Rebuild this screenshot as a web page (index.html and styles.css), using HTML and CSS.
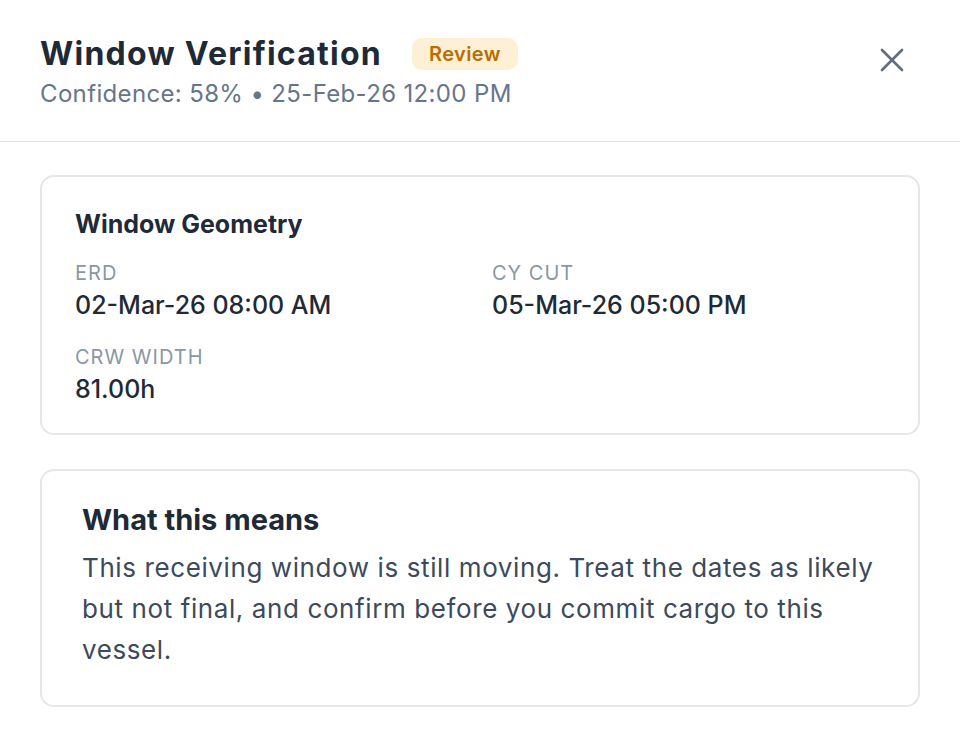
FILE: index.html
```html
<!DOCTYPE html>
<html lang="en">

<head>
    <meta charset="UTF-8">
    <meta name="viewport" content="width=device-width, initial-scale=1.0">
    <title>Window Verification</title>
    <link rel="stylesheet" href="styles.css">
</head>

<body>
    <div class="panel">
        <div class="panel__header">
            <div class="panel__heading">
                <div class="title__row">
                    <h1 class="title">Window Verification</h1>
                    <span class="badge">Review</span>
                </div>
                <p class="subtitle">Confidence: 58% &bull; 25-Feb-26 12:00 PM</p>
            </div>
            <button class="close" aria-label="Close">
                <svg width="24" height="24" viewBox="0 0 24 24" fill="none" stroke="currentColor" stroke-width="2.6" stroke-linecap="round">
                    <path d="M2 2L22 22M22 2L2 22" />
                </svg>
            </button>
        </div>

        <div class="panel__body">
            <div class="card">
                <h2 class="card__title">Window Geometry</h2>
                <div class="fields">
                    <div class="field">
                        <span class="field__label">ERD</span>
                        <span class="field__value">02-Mar-26 08:00 AM</span>
                    </div>
                    <div class="field">
                        <span class="field__label">CY CUT</span>
                        <span class="field__value">05-Mar-26 05:00 PM</span>
                    </div>
                    <div class="field">
                        <span class="field__label">CRW WIDTH</span>
                        <span class="field__value">81.00h</span>
                    </div>
                </div>
            </div>

            <div class="card card--note">
                <h2 class="note__title">What this means</h2>
                <p class="note__text">This receiving window is still moving. Treat the dates as likely but not final, and confirm before you commit cargo to this vessel.</p>
            </div>
        </div>
    </div>
</body>

</html>
```

FILE: styles.css
```css
* {
    box-sizing: border-box;
}

body {
    margin: 0;
    background: #fff;
    font-family: Inter, "Noto Sans", sans-serif;
    color: #1f2a37;
}

.panel__header {
    display: flex;
    justify-content: space-between;
    align-items: flex-start;
    padding: 34px 40px 0 40px;
    height: 142px;
    border-bottom: 1px solid #dde1e6;
}

.title__row {
    display: flex;
    align-items: center;
    gap: 30px;
}

.title {
    margin: 0;
    font-size: 32px;
    font-weight: 700;
    letter-spacing: 1.25px;
    line-height: 40px;
    color: #1f2a37;
}

.badge {
    background: #fdf0d4;
    color: #b86e00;
    font-size: 20px;
    font-weight: 600;
    letter-spacing: 0.4px;
    padding: 4px 17px;
    border-radius: 10px;
    line-height: 24px;
}

.subtitle {
    margin: 5px 0 0;
    font-size: 24px;
    letter-spacing: 0.35px;
    color: #66768a;
    line-height: 30px;
}

.close {
    border: none;
    background: none;
    padding: 0;
    margin: 14px 16px 0 0;
    color: #5f6f80;
    cursor: pointer;
}

.panel__body {
    display: flex;
    flex-direction: column;
    gap: 34px;
    padding: 33px 40px;
}

.card {
    border: 2px solid #e5e7eb;
    border-radius: 14px;
    padding: 32px 33px 29px;
}

.card__title {
    margin: 0 0 22px;
    font-size: 25px;
    font-weight: 700;
    line-height: 30px;
}

.fields {
    display: grid;
    grid-template-columns: 1fr 1fr;
    column-gap: 24px;
    row-gap: 25px;
}

.field {
    display: flex;
    flex-direction: column;
    gap: 5px;
}

.field__label {
    font-size: 20px;
    letter-spacing: 1px;
    color: #8a97a5;
    line-height: 24px;
}

.field__value {
    font-size: 25px;
    font-weight: 500;
    line-height: 30px;
    color: #1f2a37;
}

.card--note {
    padding: 31px 30px 35px 40px;
}

.note__title {
    margin: 0 0 9px;
    font-size: 29px;
    font-weight: 700;
    line-height: 36px;
}

.note__text {
    margin: 0;
    font-size: 26px;
    letter-spacing: 0.6px;
    line-height: 41px;
    color: #3d4a5a;
}
```
